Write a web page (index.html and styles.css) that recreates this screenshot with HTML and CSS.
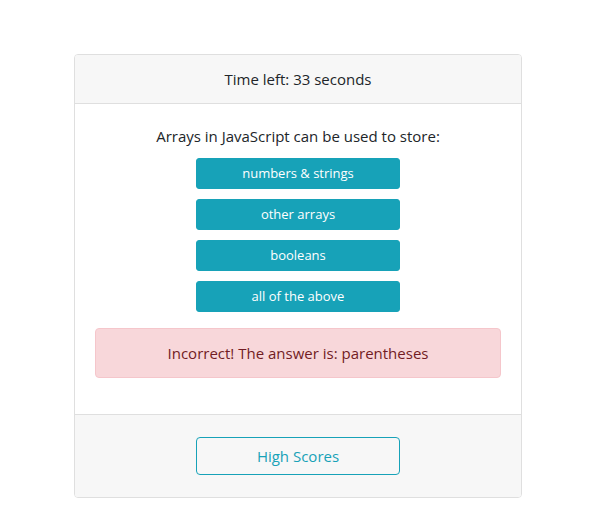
FILE: index.html
```html
<!DOCTYPE html>
<html lang="en">
<head>
<meta charset="utf-8">
<title>Quiz</title>
<link rel="stylesheet" href="styles.css">
</head>
<body>
<div class="card">
  <div class="card-header">Time left: 33 seconds</div>
  <div class="card-body">
    <p class="question">Arrays in JavaScript can be used to store:</p>
    <div class="choices">
      <button class="btn-choice">numbers &amp; strings</button>
      <button class="btn-choice">other arrays</button>
      <button class="btn-choice">booleans</button>
      <button class="btn-choice">all of the above</button>
    </div>
    <div class="alert">Incorrect! The answer is: parentheses</div>
  </div>
  <div class="card-footer">
    <button class="btn-outline">High Scores</button>
  </div>
</div>
</body>
</html>
```
FILE: styles.css
```css
* { box-sizing: border-box; }
body {
  margin: 0;
  padding-left: 2px;
  background: #fff;
  font-family: "Open Sans", "Noto Sans", sans-serif;
  font-size: 16px;
  line-height: 24px;
  color: #212529;
}
.card {
  width: 448px;
  margin: 54px auto 0;
  border: 1px solid #dfdfdf;
  border-radius: 4px;
  text-align: center;
  overflow: hidden;
}
.card-header {
  background: #f7f7f7;
  border-bottom: 1px solid #dfdfdf;
  padding: 12px 20px;
  font-size: 15px;
}
.card-body {
  padding: 20px;
}
.question {
  margin: 0 0 10px;
  font-size: 15px;
}
.choices {
  display: flex;
  flex-direction: column;
  align-items: center;
  gap: 10px;
}
.btn-choice {
  width: 204px;
  height: 31px;
  padding: 4px 8px;
  border: 1px solid #17a2b8;
  border-radius: 3px;
  background: #17a2b8;
  color: #fff;
  font-family: inherit;
  font-size: 13px;
  line-height: 21px;
}
.alert {
  margin: 16px 0;
  padding: 12px 20px;
  background: #f8d7da;
  border: 1px solid #f5c6cb;
  border-radius: 4px;
  color: #721c24;
  font-size: 15px;
}
.card-footer {
  background: #f7f7f7;
  border-top: 1px solid #dfdfdf;
  padding: 22px 20px;
  display: flex;
  justify-content: center;
}
.btn-outline {
  width: 204px;
  height: 38px;
  border: 1px solid #17a2b8;
  border-radius: 4px;
  background: transparent;
  color: #17a2b8;
  font-family: inherit;
  font-size: 15px;
  line-height: 24px;
}
```
